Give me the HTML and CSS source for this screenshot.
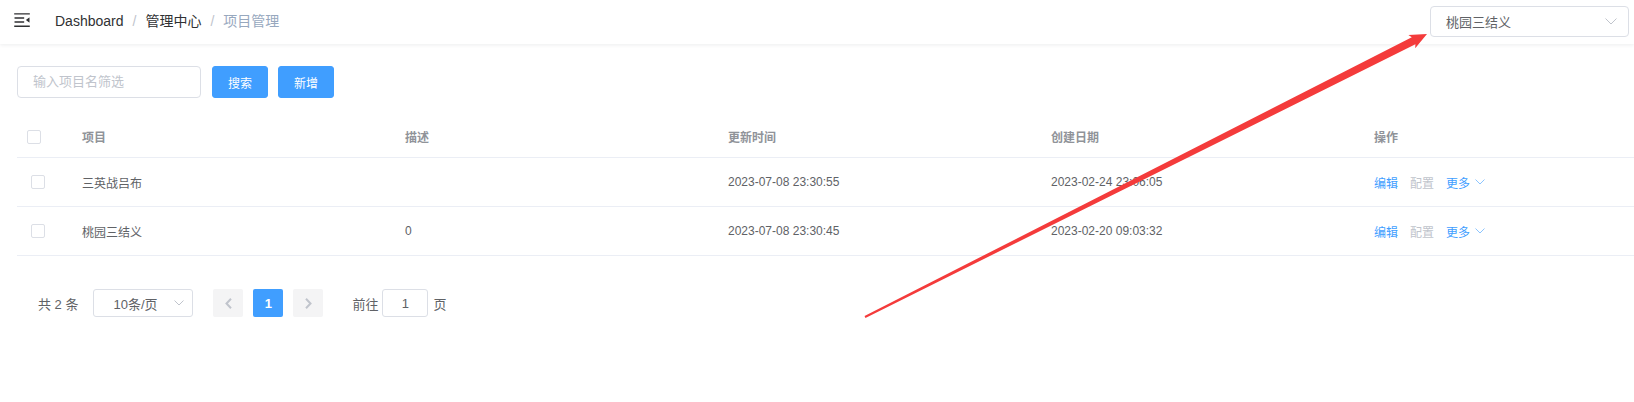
FILE: index.html
```html
<!DOCTYPE html>
<html lang="zh-CN">
<head>
<meta charset="utf-8">
<title>项目管理</title>
<link rel="stylesheet" href="styles.css">
</head>
<body>
<div class="navbar">
  <div class="hamburger-box">
    <svg class="hamburger" viewBox="0 0 1024 1024" width="20" height="20"><path d="M408 442h480c4.4 0 8-3.6 8-8v-56c0-4.4-3.6-8-8-8H408c-4.4 0-8 3.6-8 8v56c0 4.4 3.6 8 8 8zm-8 204c0 4.4 3.6 8 8 8h480c4.4 0 8-3.6 8-8v-56c0-4.4-3.6-8-8-8H408c-4.4 0-8 3.6-8 8v56zm504-486H120c-4.4 0-8 3.6-8 8v56c0 4.4 3.6 8 8 8h784c4.4 0 8-3.6 8-8v-56c0-4.4-3.6-8-8-8zm0 632H120c-4.4 0-8 3.6-8 8v56c0 4.4 3.6 8 8 8h784c4.4 0 8-3.6 8-8v-56c0-4.4-3.6-8-8-8zM142.4 642.1L298.7 519a8.84 8.84 0 0 0 0-13.9L142.4 381.9c-5.8-4.6-14.4-.5-14.4 6.9v246.3a8.9 8.9 0 0 0 14.4 7z"/></svg>
  </div>
  <nav class="breadcrumb">
    <span class="crumb">Dashboard</span><span class="sep">/</span><span class="crumb">管理中心</span><span class="sep">/</span><span class="crumb last">项目管理</span>
  </nav>
  <div class="project-select">
    <span class="select-text">桃园三结义</span>
    <svg class="select-arrow" width="12" height="7" viewBox="0 0 12 7"><polyline points="0.5,0.5 6,6 11.5,0.5" fill="none" stroke="#c0c4cc" stroke-width="1"/></svg>
  </div>
</div>

<div class="app-container">
  <div class="filter">
    <div class="filter-input">输入项目名筛选</div>
    <button class="btn">搜索</button>
    <button class="btn">新增</button>
  </div>

  <div class="table">
    <div class="row head">
      <div class="cell cb-cell head-cb"><span class="checkbox"></span></div>
      <div class="cell">项目</div>
      <div class="cell">描述</div>
      <div class="cell">更新时间</div>
      <div class="cell">创建日期</div>
      <div class="cell">操作</div>
    </div>
    <div class="row">
      <div class="cell cb-cell"><span class="checkbox"></span></div>
      <div class="cell">三英战吕布</div>
      <div class="cell"></div>
      <div class="cell">2023-07-08 23:30:55</div>
      <div class="cell">2023-02-24 23:06:05</div>
      <div class="cell ops"><span class="link">编辑</span><span class="link disabled">配置</span><span class="link">更多<svg class="more-arrow" width="10" height="6" viewBox="0 0 10 6"><polyline points="0.5,0.5 5,5 9.5,0.5" fill="none" stroke="#8cc5ff" stroke-width="1"/></svg></span></div>
    </div>
    <div class="row">
      <div class="cell cb-cell"><span class="checkbox"></span></div>
      <div class="cell">桃园三结义</div>
      <div class="cell">0</div>
      <div class="cell">2023-07-08 23:30:45</div>
      <div class="cell">2023-02-20 09:03:32</div>
      <div class="cell ops"><span class="link">编辑</span><span class="link disabled">配置</span><span class="link">更多<svg class="more-arrow" width="10" height="6" viewBox="0 0 10 6"><polyline points="0.5,0.5 5,5 9.5,0.5" fill="none" stroke="#8cc5ff" stroke-width="1"/></svg></span></div>
    </div>
  </div>

  <div class="pagination">
    <span class="total">共 2 条</span>
    <div class="sizes">
      <span>10条/页</span>
      <svg class="sizes-arrow" width="10" height="6" viewBox="0 0 10 6"><polyline points="0.5,0.5 5,5 9.5,0.5" fill="none" stroke="#c0c4cc" stroke-width="1"/></svg>
    </div>
    <span class="pbtn"><svg width="7" height="11" viewBox="0 0 7 11"><polyline points="6,0.8 1.5,5.5 6,10.2" fill="none" stroke="#c0c4cc" stroke-width="2"/></svg></span>
    <span class="pbtn active">1</span>
    <span class="pbtn"><svg width="7" height="11" viewBox="0 0 7 11"><polyline points="1,0.8 5.5,5.5 1,10.2" fill="none" stroke="#c0c4cc" stroke-width="2"/></svg></span>
    <span class="jump">前往</span>
    <span class="jump-input">1</span>
    <span class="jump-suffix">页</span>
  </div>
</div>

<svg class="annotation" width="1634" height="402" viewBox="0 0 1634 402">
  <polygon points="864.55,316.11 1411.8,37.18 1408.4,34.95 1427,34 1415.2,48.35 1415.4,44.32 865.45,317.89" fill="#f43b3b"/>
</svg>
</body>
</html>
```

FILE: styles.css
```css
* { box-sizing: border-box; }

html, body {
  margin: 0;
  padding: 0;
  background: #fff;
  font-family: "Liberation Sans", "Noto Sans CJK SC", sans-serif;
  color: #606266;
}

body {
  position: relative;
  width: 1634px;
  height: 402px;
  overflow: hidden;
}

.navbar {
  height: 44px;
  display: flex;
  align-items: center;
  box-shadow: 0 1px 4px rgba(0, 21, 41, 0.08);
  position: relative;
}

.hamburger-box {
  width: 32px;
  padding-left: 12px;
  height: 20px;
  margin-top: -4px;
  display: flex;
}

.hamburger {
  transform: rotate(180deg);
  fill: #303133;
}

.breadcrumb {
  margin-left: 23px;
  font-size: 14px;
  line-height: 1;
  display: flex;
  align-items: center;
  margin-top: -2px;
}

.crumb { color: #303133; }
.crumb.last { color: #97a8be; }

.sep {
  color: #c0c4cc;
  margin: 0 9px;
}

.project-select {
  margin-left: auto;
  margin-right: 5px;
  margin-top: -2px;
  width: 199px;
  height: 31px;
  border: 1px solid #dcdfe6;
  border-radius: 4px;
  display: flex;
  align-items: center;
  padding-left: 15px;
  padding-right: 11px;
}

.select-text {
  font-size: 13px;
  color: #606266;
}

.select-arrow { margin-left: auto; }

.app-container {
  padding: 22px 0 0 17px;
}

.filter {
  display: flex;
  align-items: center;
  gap: 10px;
}

.filter-input {
  width: 184px;
  height: 32px;
  border: 1px solid #dcdfe6;
  border-radius: 4px;
  padding-left: 15px;
  font-size: 13px;
  line-height: 30px;
  color: #c0c4cc;
  margin-right: 1px;
}

.btn {
  height: 32px;
  width: 56px;
  border: 1px solid #409eff;
  border-radius: 3px;
  background: #409eff;
  color: #fff;
  font-size: 12px;
  font-family: inherit;
  padding: 0;
}

.table {
  margin-top: 18px;
  overflow: hidden;
}

.row {
  display: grid;
  grid-template-columns: 55px repeat(5, 323px);
  height: 49px;
  border-bottom: 1px solid #ebeef5;
  align-items: center;
  font-size: 12px;
  color: #606266;
}

.row.head {
  height: 42px;
  color: #909399;
  font-weight: bold;
}

.cell {
  padding-left: 10px;
  white-space: nowrap;
  display: flex;
  align-items: center;
}

.cb-cell { padding-left: 14px; }
.head-cb { padding-left: 10px; }

.checkbox {
  display: block;
  width: 14px;
  height: 14px;
  border: 1px solid #dcdfe6;
  border-radius: 2px;
  background: #fff;
}

.ops { gap: 12px; }

.link {
  color: #409eff;
  display: flex;
  align-items: center;
}

.link.disabled { color: #c0c4cc; }

.more-arrow { margin-left: 5px; }

.pagination {
  margin-top: 33px;
  padding-left: 21px;
  display: flex;
  align-items: center;
  height: 28px;
  font-size: 13px;
  color: #606266;
}

.total { margin-right: 15px; }

.sizes {
  width: 100px;
  height: 28px;
  border: 1px solid #dcdfe6;
  border-radius: 3px;
  display: flex;
  align-items: center;
  padding-left: 19px;
  padding-right: 8px;
  margin-right: 15px;
}

.sizes-arrow { margin-left: auto; }

.pbtn {
  width: 30px;
  height: 28px;
  margin: 0 5px;
  background: #f4f4f5;
  border-radius: 2px;
  display: flex;
  align-items: center;
  justify-content: center;
  font-weight: bold;
  color: #606266;
}

.pbtn.active {
  background: #409eff;
  color: #fff;
}

.jump { margin-left: 24px; }

.jump-input {
  width: 46px;
  height: 28px;
  margin: 0 5px 0 4px;
  border: 1px solid #dcdfe6;
  border-radius: 3px;
  display: flex;
  align-items: center;
  justify-content: center;
}

.annotation {
  position: absolute;
  left: 0;
  top: 0;
  pointer-events: none;
}
```
